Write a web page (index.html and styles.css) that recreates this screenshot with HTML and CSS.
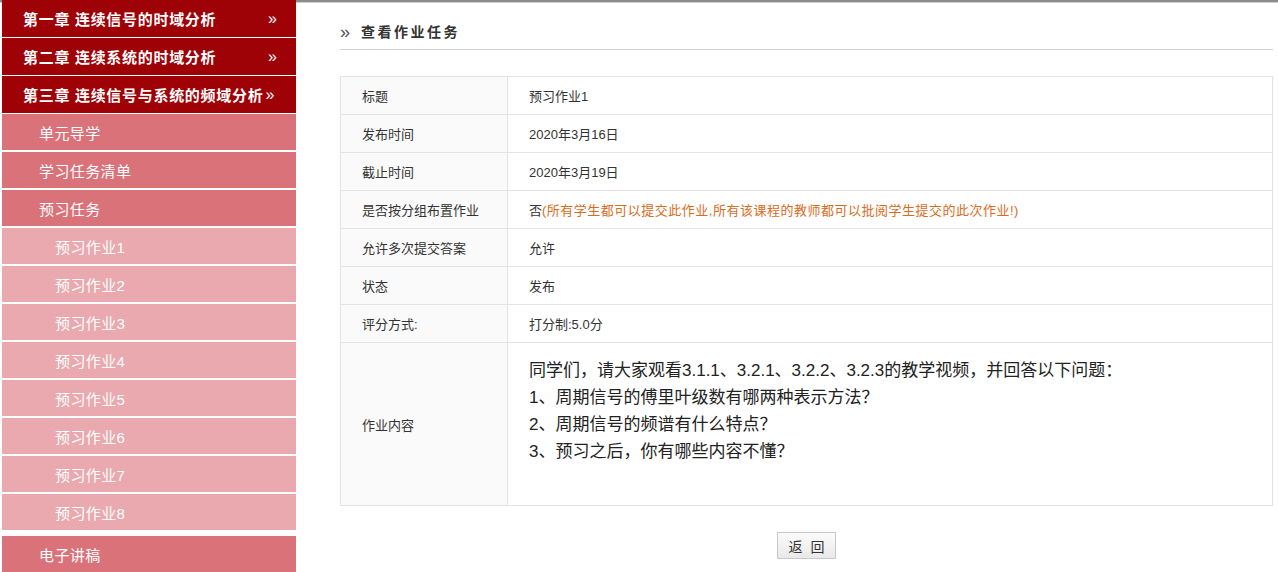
FILE: index.html
```html
<!DOCTYPE html>
<html lang="zh-CN">
<head>
  <meta charset="UTF-8">
  <title>查看作业任务</title>
  <link rel="stylesheet" href="styles.css">
</head>
<body>
  <div class="topline"></div>
  <div class="page">
    <ul class="menu">
      <li class="chapter"><a href="#">第一章 连续信号的时域分析<span class="arr">&raquo;</span></a></li>
      <li class="chapter"><a href="#">第二章 连续系统的时域分析<span class="arr">&raquo;</span></a></li>
      <li class="chapter"><a href="#">第三章 连续信号与系统的频域分析<span class="arr">&raquo;</span></a></li>
      <li class="unit"><a href="#">单元导学</a></li>
      <li class="unit"><a href="#">学习任务清单</a></li>
      <li class="unit"><a href="#">预习任务</a></li>
      <li class="task"><a href="#">预习作业1</a></li>
      <li class="task"><a href="#">预习作业2</a></li>
      <li class="task"><a href="#">预习作业3</a></li>
      <li class="task"><a href="#">预习作业4</a></li>
      <li class="task"><a href="#">预习作业5</a></li>
      <li class="task"><a href="#">预习作业6</a></li>
      <li class="task"><a href="#">预习作业7</a></li>
      <li class="task"><a href="#">预习作业8</a></li>
      <li class="unit last"><a href="#">电子讲稿</a></li>
    </ul>

    <div class="main">
      <h2 class="title"><span class="mark">&raquo;</span>查看作业任务</h2>

      <table class="detail">
        <tr><th>标题</th><td>预习作业1</td></tr>
        <tr><th>发布时间</th><td>2020年3月16日</td></tr>
        <tr><th>截止时间</th><td>2020年3月19日</td></tr>
        <tr><th>是否按分组布置作业</th><td>否<span class="note">(所有学生都可以提交此作业,所有该课程的教师都可以批阅学生提交的此次作业!)</span></td></tr>
        <tr><th>允许多次提交答案</th><td>允许</td></tr>
        <tr><th>状态</th><td>发布</td></tr>
        <tr><th>评分方式:</th><td>打分制:5.0分</td></tr>
        <tr class="content-row">
          <th>作业内容</th>
          <td>
            <div class="content">
              <p>同学们，请大家观看3.1.1、3.2.1、3.2.2、3.2.3的教学视频，并回答以下问题：</p>
              <p>1、周期信号的傅里叶级数有哪两种表示方法？</p>
              <p>2、周期信号的频谱有什么特点？</p>
              <p>3、预习之后，你有哪些内容不懂？</p>
            </div>
          </td>
        </tr>
      </table>

      <div class="actions">
        <button type="button" class="btn">返&nbsp;&nbsp;回</button>
      </div>
    </div>
  </div>
</body>
</html>
```

FILE: styles.css
```css
body { margin:0; background:#fff; color:#333; font-family:"Liberation Sans", "Noto Sans CJK SC", sans-serif; font-size:13px; }
.topline { height:2px; background:#8a8a8a; border-bottom:1px solid #d0d0d0; }
.page { display:flex; align-items:flex-start; }

.menu { list-style:none; margin:-3px 0 0 2px; padding:0; width:294px; flex:none; }
.menu li { border-bottom:2px solid #fff; }
.menu a { display:flex; align-items:center; height:36px; color:#fff; text-decoration:none; font-size:15px; letter-spacing:0.4px; }
.menu .chapter { border-bottom-width:1px; }
.menu .chapter a { background:#9e0207; padding-left:21px; font-weight:bold; height:37px; letter-spacing:0.7px; }
.menu .arr { margin-left:auto; margin-right:19px; font-weight:normal; font-size:16px; letter-spacing:0; }
.menu .chapter:nth-child(3) .arr { margin-left:2px; }
.menu .unit a { background:#da727a; padding-left:37px; }
.menu .task a { background:#e9a9ae; padding-left:53px; }
.menu .last { border-top:4px solid #fff; }

.main { flex:1; padding:19px 5px 0 44px; }
.title { margin:0; padding:0 0 9px 0; border-bottom:1px solid #cfcfcf; font-size:14px; font-weight:bold; color:#333; display:flex; align-items:center; height:18px; letter-spacing:2.5px; }
.title .mark { font-size:18px; font-weight:normal; color:#555; margin-right:11px; position:relative; top:1px; letter-spacing:0; }

.detail { width:100%; margin-top:26px; border-collapse:collapse; }
.detail th, .detail td { border:1px solid #e3e3e3; height:37px; padding:0 0 0 21px; text-align:left; font-weight:normal; color:#333; }
.detail th { width:145px; background:#fafafa; }
.detail td { background:#fff; }
.note { color:#d96b1c; letter-spacing:0.5px; }
.content-row th, .content-row td { height:162px; }
.content { padding-top:0; padding-bottom:26px; font-size:17px; line-height:27px; color:#222; }
.content p { margin:0; }

.actions { text-align:center; padding-top:26px; }
.btn { width:59px; height:27px; font-size:14px; font-family:"Liberation Sans", "Noto Sans CJK SC", sans-serif; color:#333; border:1px solid #c8c8c8; background:linear-gradient(#fbfbfb, #e9e9e9); border-radius:0; padding:0; cursor:pointer; }
```
